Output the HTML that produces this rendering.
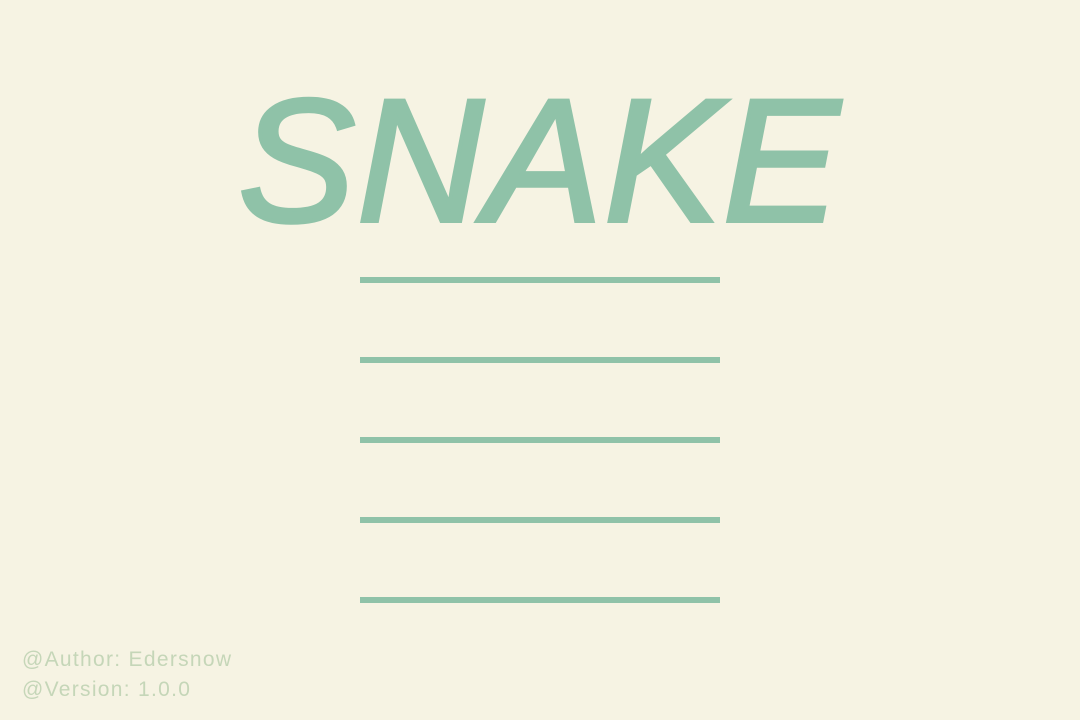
<!DOCTYPE html>
<html><head><meta charset="utf-8"><style>
html,body{margin:0;padding:0}
body{width:1080px;height:720px;background:#f6f3e3;position:relative;overflow:hidden;font-family:"Liberation Sans",sans-serif}
.t{position:absolute;left:0;width:1080px;top:62px;text-align:center;font-size:175px;font-weight:normal;font-style:italic;color:#8fc2a8;line-height:200px;letter-spacing:2px;-webkit-text-stroke:4px #8fc2a8}
.l{position:absolute;left:360px;width:360px;height:6px;background:#8fc2a8}
.f{position:absolute;left:22px;font-size:21px;color:#c5d6b8;line-height:30px;letter-spacing:1.3px}
</style></head><body>
<div class="t">SNAKE</div>
<div class="l" style="top:277px"></div>
<div class="l" style="top:357px"></div>
<div class="l" style="top:437px"></div>
<div class="l" style="top:517px"></div>
<div class="l" style="top:597px"></div>
<div class="f" style="top:645px">@Author: Edersnow<br>@Version: 1.0.0</div>
</body></html>
